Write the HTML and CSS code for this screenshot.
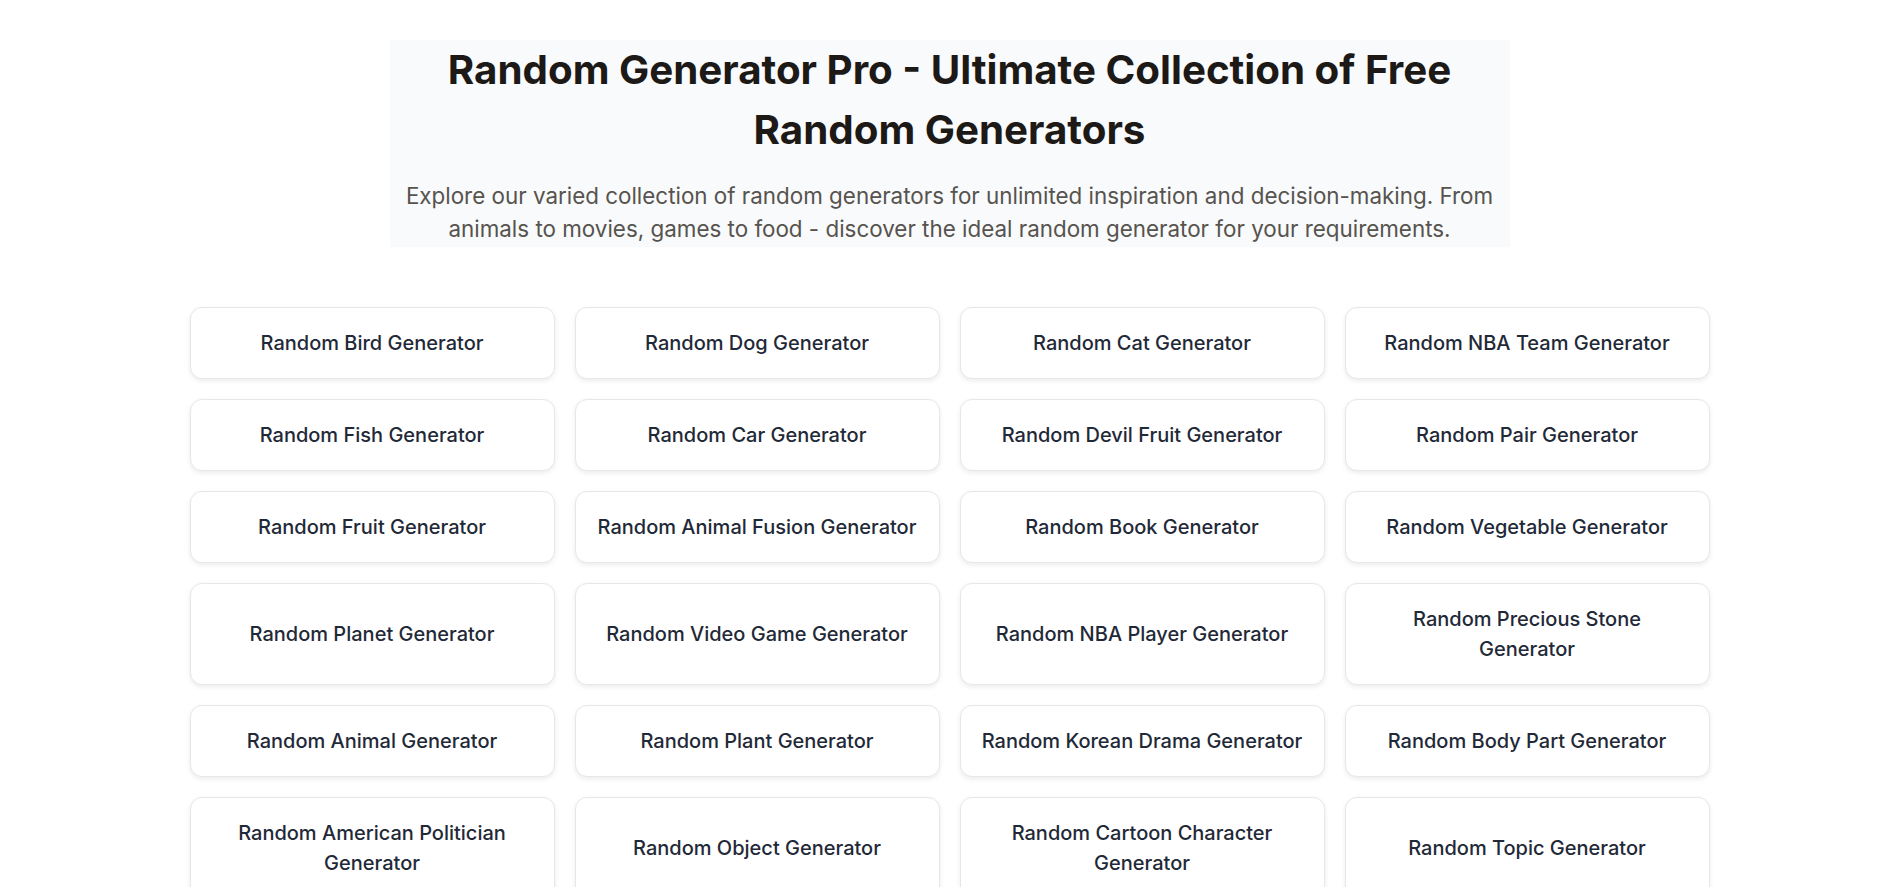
FILE: index.html
```html
<!DOCTYPE html>
<html lang="en">
<head>
  <meta charset="UTF-8" />
  <meta name="viewport" content="width=device-width, initial-scale=1.0"/>
  <title>Random Generator Pro</title>
  <link rel="stylesheet" href="styles.css">
</head>
<body>

  <header class="intro">
    <h1>Random Generator Pro - Ultimate Collection of Free Random Generators</h1>
    <p>Explore our varied collection of random generators for unlimited inspiration and decision-making. From animals to movies, games to food - discover the ideal random generator for your requirements.</p>
  </header>

  <main class="generator-grid">
    <a class="card" href="#">Random Bird Generator</a>
    <a class="card" href="#">Random Dog Generator</a>
    <a class="card" href="#">Random Cat Generator</a>
    <a class="card" href="#">Random NBA Team Generator</a>
    <a class="card" href="#">Random Fish Generator</a>
    <a class="card" href="#">Random Car Generator</a>
    <a class="card" href="#">Random Devil Fruit Generator</a>
    <a class="card" href="#">Random Pair Generator</a>
    <a class="card" href="#">Random Fruit Generator</a>
    <a class="card" href="#">Random Animal Fusion Generator</a>
    <a class="card" href="#">Random Book Generator</a>
    <a class="card" href="#">Random Vegetable Generator</a>
    <a class="card" href="#">Random Planet Generator</a>
    <a class="card" href="#">Random Video Game Generator</a>
    <a class="card" href="#">Random NBA Player Generator</a>
    <a class="card" href="#">Random Precious Stone Generator</a>
    <a class="card" href="#">Random Animal Generator</a>
    <a class="card" href="#">Random Plant Generator</a>
    <a class="card" href="#">Random Korean Drama Generator</a>
    <a class="card" href="#">Random Body Part Generator</a>
    <a class="card" href="#">Random American Politician Generator</a>
    <a class="card" href="#">Random Object Generator</a>
    <a class="card" href="#">Random Cartoon Character Generator</a>
    <a class="card" href="#">Random Topic Generator</a>
  </main>

</body>
</html>
```

FILE: styles.css
```css
body {
  margin: 0;
  font-family: Inter, "Noto Sans", sans-serif;
  background-color: #fff;
  color: #1f2937;
}

.intro {
  max-width: 1120px;
  margin: 40px auto 0;
  padding: 0 10px 2px;
  box-sizing: border-box;
  background-color: #f8fafc;
  text-align: center;
}

.intro h1 {
  margin: 0 0 20px;
  font-size: 40.3px;
  line-height: 60px;
  font-weight: 700;
  color: #1c1917;
}

.intro p {
  margin: 0;
  font-size: 22.4px;
  line-height: 32.5px;
  color: #57534e;
}

.generator-grid {
  max-width: 1520px;
  margin: 60px auto 40px;
  display: grid;
  grid-template-columns: repeat(4, 1fr);
  gap: 20px;
}

.card {
  display: flex;
  align-items: center;
  justify-content: center;
  padding: 20px;
  background: #fff;
  border: 1px solid #e5e7eb;
  border-radius: 12px;
  box-shadow: 0 2px 5px rgba(0, 0, 0, 0.08);
  text-align: center;
  text-decoration: none;
  color: #1f2937;
  font-size: 20px;
  font-weight: 500;
  line-height: 30px;
}

.card:hover {
  border-color: #cbd5e1;
}
```
